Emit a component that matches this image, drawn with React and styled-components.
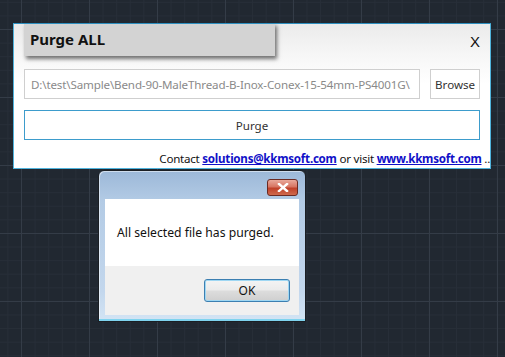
import styled, { createGlobalStyle } from "styled-components";

const GlobalStyle = createGlobalStyle`
  html, body {
    margin: 0;
    padding: 0;
    width: 505px;
    height: 357px;
    overflow: hidden;
  }
  body {
    font-family: "Noto Sans", "Open Sans", sans-serif;
  }
`;

function App() {
  return (
    <Desktop>
      <GlobalStyle />

      <MainWindow>
        <Header>
          <TitleTab>Purge ALL</TitleTab>
          <CloseText>X</CloseText>
        </Header>

        <PathRow>
          <PathInput
            readOnly
            value="D:\test\Sample\Bend-90-MaleThread-B-Inox-Conex-15-54mm-PS4001G\"
          />
          <BrowseButton>Browse</BrowseButton>
        </PathRow>

        <PurgeButton>Purge</PurgeButton>

        <Contact>
          Contact <Link>solutions@kkmsoft.com</Link> or visit <Link>www.kkmsoft.com</Link> ..
        </Contact>
      </MainWindow>

      <MessageBox>
        <MsgTitleBar>
          <RedClose>
            <svg width="12" height="9" viewBox="0 0 12 9">
              <path d="M2 1 L10 8 M10 1 L2 8" stroke="#fff" strokeWidth="2.4" strokeLinecap="square" />
            </svg>
          </RedClose>
        </MsgTitleBar>
        <MsgBody>All selected file has purged.</MsgBody>
        <MsgFooter>
          <OkButton>OK</OkButton>
        </MsgFooter>
      </MessageBox>
    </Desktop>
  );
}

const Desktop = styled.div`
  width: 505px;
  height: 357px;
  box-sizing: border-box;
  padding: 23px 0 0 13px;
  background-color: #212831;
  background-image:
    linear-gradient(90deg, #343c47 1px, transparent 1px),
    linear-gradient(0deg, #343c47 1px, transparent 1px),
    linear-gradient(90deg, #272e38 1px, transparent 1px),
    linear-gradient(0deg, #272e38 1px, transparent 1px);
  background-size: 68px 68px, 68px 68px, 13.6px 13.6px, 13.6px 13.6px;
  background-position: 21px 0, 0 30px, 21px 0, 0 30px;
`;

const MainWindow = styled.div`
  width: 478px;
  height: 146px;
  box-sizing: border-box;
  border: 1px solid #4fb3dc;
  border-top-color: #2d8fbf;
  background: linear-gradient(180deg, #ebebeb 0px, #f6f6f6 30px, #ffffff 60px);
  padding: 0 10px 0 10px;
  display: flex;
  flex-direction: column;
  overflow: hidden;
`;

const Header = styled.div`
  height: 33px;
  display: flex;
  align-items: flex-start;
  justify-content: space-between;
`;

const TitleTab = styled.div`
  width: 251px;
  height: 33px;
  box-sizing: border-box;
  margin-top: -1px;
  padding: 6px 0 0 6px;
  background: #d3d3d3;
  box-shadow: 2px 3px 4px rgba(0, 0, 0, 0.55);
  font-size: 15px;
  font-weight: bold;
  color: #111;
`;

const CloseText = styled.div`
  margin-top: 9px;
  font-size: 15px;
  color: #111;
  font-family: "Liberation Sans", sans-serif;
`;

const PathRow = styled.div`
  margin-top: 12px;
  display: flex;
  gap: 10px;
  height: 30px;
`;

const PathInput = styled.input`
  width: 398px;
  height: 30px;
  box-sizing: border-box;
  border: 1px solid #cfcfcf;
  background: #fff;
  padding: 0 0 0 6px;
  font-family: "Noto Sans", sans-serif;
  font-size: 11.6px;
  letter-spacing: -0.15px;
  color: #8a8a8a;
  outline: none;
  margin: 0;
`;

const BrowseButton = styled.button`
  width: 50px;
  height: 30px;
  box-sizing: border-box;
  border: 1px solid #cfcfcf;
  background: #fff;
  font-family: "Noto Sans", sans-serif;
  font-size: 11.6px;
  color: #333;
  padding: 0;
  margin: 0;
`;

const PurgeButton = styled.button`
  margin-top: 11px;
  width: 456px;
  height: 30px;
  box-sizing: border-box;
  border: 1px solid #3d9ccc;
  background: #fff;
  font-family: "Noto Sans", sans-serif;
  font-size: 11.6px;
  color: #333;
  padding: 0;
`;

const Contact = styled.div`
  margin-top: 11px;
  margin-right: -10px;
  text-align: right;
  white-space: nowrap;
  font-size: 11.6px;
  letter-spacing: -0.25px;
  color: #111;
`;

const Link = styled.span`
  color: #1010c8;
  font-weight: bold;
  text-decoration: underline;
`;

const MessageBox = styled.div`
  margin: 1px 0 0 85px;
  width: 208px;
  height: 152px;
  box-sizing: border-box;
  border: 1px solid #1b1f24;
  border-radius: 6px 6px 0 0;
  background: linear-gradient(180deg, #9cb8d8 0px, #b3cbe5 30px, #c3d7ed 120px, #d3e4f4 150px);
  box-shadow: inset 0 -2px 0 #7fd3ee, inset 1px 1px 0 rgba(255, 255, 255, 0.5);
  padding: 0 6px 6px 6px;
  display: flex;
  flex-direction: column;
`;

const MsgTitleBar = styled.div`
  height: 28px;
  display: flex;
  justify-content: flex-end;
  align-items: flex-start;
`;

const RedClose = styled.div`
  margin-top: 8px;
  margin-right: 1px;
  width: 31px;
  height: 17px;
  box-sizing: border-box;
  border: 1px solid #6b2a22;
  border-radius: 3px;
  background: linear-gradient(180deg, #e9a99b 0%, #d77563 45%, #c0412a 55%, #cf6a4d 100%);
  display: flex;
  align-items: center;
  justify-content: center;
`;

const MsgBody = styled.div`
  height: 67px;
  box-sizing: border-box;
  background: #fff;
  padding: 25px 0 0 12px;
  font-size: 12.2px;
  color: #111;
`;

const MsgFooter = styled.div`
  flex: 1;
  background: #f0f0f0;
  display: flex;
  justify-content: flex-end;
  align-items: flex-start;
  padding: 13px 9px 0 0;
`;

const OkButton = styled.button`
  width: 86px;
  height: 23px;
  box-sizing: border-box;
  border: 1px solid #3c7fb1;
  border-radius: 3px;
  background: linear-gradient(180deg, #f4f4f4 0%, #ebebeb 48%, #dddddd 52%, #cfcfcf 100%);
  box-shadow: inset 0 0 0 1px #9fd7f3;
  font-family: "Noto Sans", sans-serif;
  font-size: 12px;
  color: #111;
  padding: 0;
`;

export default App;
